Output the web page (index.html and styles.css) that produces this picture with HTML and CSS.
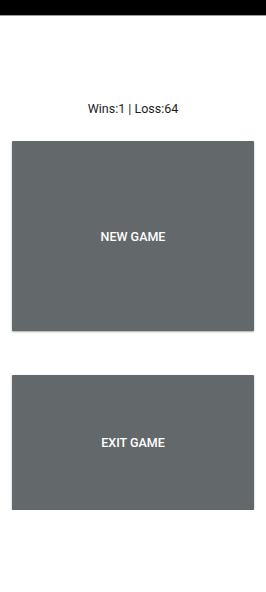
FILE: index.html
```html
<!DOCTYPE html>
<html lang="en">
  <head>
    <meta charset="UTF-8" />
    <meta name="viewport" content="width=device-width, initial-scale=1.0" />
    <title>Game Menu</title>
    <link rel="stylesheet" href="styles.css">
  </head>
  <body>
    <div class="status-bar"></div>
    <div class="menu">
      <div class="record">Wins:1 | Loss:64</div>
      <button class="menu-btn new-game">NEW GAME</button>
      <button class="menu-btn exit-game">EXIT GAME</button>
    </div>
  </body>
</html>
```

FILE: styles.css
```css
body {
  margin: 0;
  padding: 0;
  background-color: #ffffff;
  font-family: Roboto, "Liberation Sans", sans-serif;
}

.status-bar {
  height: 16px;
  background-color: #000000;
  border-bottom: 1px solid #9a9a9a;
  box-sizing: border-box;
}

.menu {
  display: flex;
  flex-direction: column;
  align-items: center;
  padding: 0 12px;
}

.record {
  margin-top: 85px;
  font-size: 12.5px;
  line-height: 16px;
  color: #1c1c1c;
}

.menu-btn {
  width: 100%;
  border: none;
  border-radius: 1px;
  background-color: #63686a;
  color: #ffffff;
  font-family: Roboto, "Liberation Sans", sans-serif;
  font-size: 12.5px;
  font-weight: 500;
  box-shadow: 0 1px 2px rgba(0, 0, 0, 0.35);
}

.new-game {
  margin-top: 24px;
  height: 190px;
}

.exit-game {
  margin-top: 44px;
  height: 135px;
}
```
